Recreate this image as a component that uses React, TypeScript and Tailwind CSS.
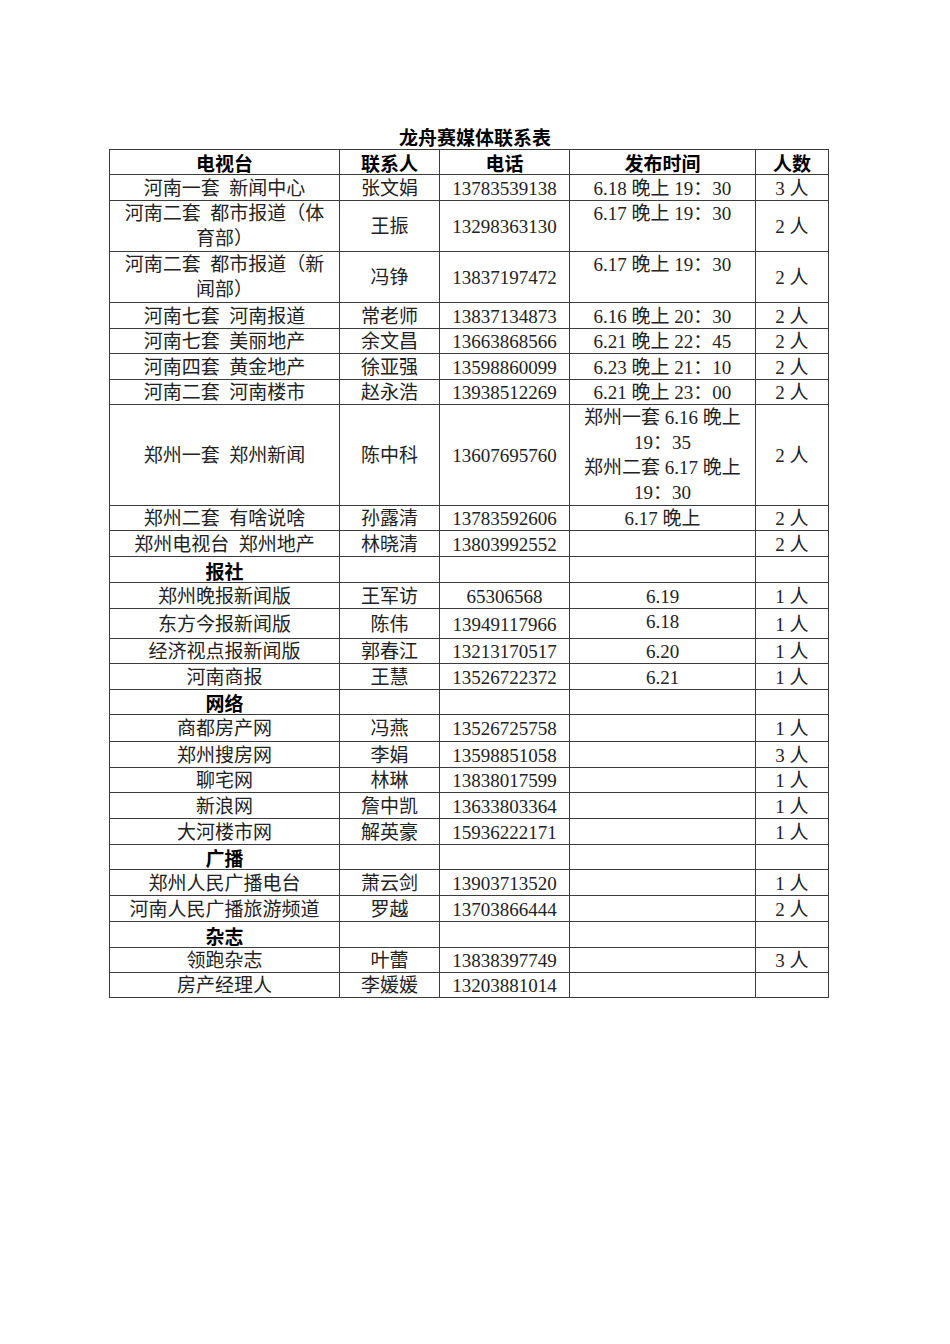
type Row = {
  cells: React.ReactNode[]
  h: string
  section?: boolean
  topTime?: boolean
}

const S = '\u2002'

const rows: Row[] = [
  { h: 'h-[26px]', cells: [`河南一套${S}新闻中心`, '张文娟', '13783539138', '6.18 晚上 19：30', '3 人'] },
  {
    h: 'h-[51px]',
    topTime: true,
    cells: [
      <>河南二套{S}都市报道（体<br />育部）</>,
      '王振',
      '13298363130',
      '6.17 晚上 19：30',
      '2 人',
    ],
  },
  {
    h: 'h-[51px]',
    topTime: true,
    cells: [
      <>河南二套{S}都市报道（新<br />闻部）</>,
      '冯铮',
      '13837197472',
      '6.17 晚上 19：30',
      '2 人',
    ],
  },
  { h: 'h-[26px]', cells: [`河南七套${S}河南报道`, '常老师', '13837134873', '6.16 晚上 20：30', '2 人'] },
  { h: 'h-[25px]', cells: [`河南七套${S}美丽地产`, '余文昌', '13663868566', '6.21 晚上 22：45', '2 人'] },
  { h: 'h-[26px]', cells: [`河南四套${S}黄金地产`, '徐亚强', '13598860099', '6.23 晚上 21：10', '2 人'] },
  { h: 'h-[25px]', cells: [`河南二套${S}河南楼市`, '赵永浩', '13938512269', '6.21 晚上 23：00', '2 人'] },
  {
    h: 'h-[101px]',
    cells: [
      `郑州一套${S}郑州新闻`,
      '陈中科',
      '13607695760',
      <>郑州一套 6.16 晚上<br />19：35<br />郑州二套 6.17 晚上<br />19：30</>,
      '2 人',
    ],
  },
  { h: 'h-[25px]', cells: [`郑州二套${S}有啥说啥`, '孙露清', '13783592606', '6.17 晚上', '2 人'] },
  { h: 'h-[26px]', cells: [`郑州电视台${S}郑州地产`, '林晓清', '13803992552', '', '2 人'] },
  { h: 'h-[26px]', section: true, cells: ['报社', '', '', '', ''] },
  { h: 'h-[26px]', cells: ['郑州晚报新闻版', '王军访', '65306568', '6.19', '1 人'] },
  { h: 'h-[30px]', topTime: true, cells: ['东方今报新闻版', '陈伟', '13949117966', '6.18', '1 人'] },
  { h: 'h-[25px]', cells: ['经济视点报新闻版', '郭春江', '13213170517', '6.20', '1 人'] },
  { h: 'h-[26px]', cells: ['河南商报', '王慧', '13526722372', '6.21', '1 人'] },
  { h: 'h-[25px]', section: true, cells: ['网络', '', '', '', ''] },
  { h: 'h-[27px]', cells: ['商都房产网', '冯燕', '13526725758', '', '1 人'] },
  { h: 'h-[26px]', cells: ['郑州搜房网', '李娟', '13598851058', '', '3 人'] },
  { h: 'h-[25px]', cells: ['聊宅网', '林琳', '13838017599', '', '1 人'] },
  { h: 'h-[26px]', cells: ['新浪网', '詹中凯', '13633803364', '', '1 人'] },
  { h: 'h-[26px]', cells: ['大河楼市网', '解英豪', '15936222171', '', '1 人'] },
  { h: 'h-[25px]', section: true, cells: ['广播', '', '', '', ''] },
  { h: 'h-[26px]', cells: ['郑州人民广播电台', '萧云剑', '13903713520', '', '1 人'] },
  { h: 'h-[26px]', cells: ['河南人民广播旅游频道', '罗越', '13703866444', '', '2 人'] },
  { h: 'h-[26px]', section: true, cells: ['杂志', '', '', '', ''] },
  { h: 'h-[25px]', cells: ['领跑杂志', '叶蕾', '13838397749', '', '3 人'] },
  { h: 'h-[25px]', cells: ['房产经理人', '李媛媛', '13203881014', '', ''] },
]

const headers = ['电视台', '联系人', '电话', '发布时间', '人数']

const serif = "font-['Liberation_Serif','Noto_Sans_CJK_SC',serif]"
const sans = "font-['Noto_Sans_CJK_SC',sans-serif]"

export default function App() {
  return (
    <div className="w-[950px] min-h-[1344px] bg-white pt-[125px] text-black">
      <h1 className={`${sans} text-center text-[19px] font-bold leading-[24px]`}>龙舟赛媒体联系表</h1>
      <div className="pl-[109px]">
        <table className="w-[719px] table-fixed border-collapse text-[19px]">
          <colgroup>
            <col className="w-[230px]" />
            <col className="w-[100px]" />
            <col className="w-[130px]" />
            <col className="w-[186px]" />
            <col className="w-[73px]" />
          </colgroup>
          <thead>
            <tr className="h-[25px]">
              {headers.map((t) => (
                <th
                  key={t}
                  className={`${sans} border border-[#3c3c3c] p-0 pt-[2px] text-center align-middle font-bold leading-[22px]`}
                >
                  {t}
                </th>
              ))}
            </tr>
          </thead>
          <tbody>
            {rows.map((r, i) => (
              <tr key={i} className={r.h}>
                {r.cells.map((c, j) => (
                  <td
                    key={j}
                    className={`border border-[#3c3c3c] p-0 text-center whitespace-nowrap ${
                      typeof c === 'string' ? 'leading-[22px] pt-[2px]' : 'leading-[25px]'
                    } ${r.section && j === 0 ? `${sans} font-bold` : `${serif} text-[#222]`} ${
                      r.topTime && j === 3 ? 'align-top' : 'align-middle'
                    }`}
                  >
                    {c}
                  </td>
                ))}
              </tr>
            ))}
          </tbody>
        </table>
      </div>
    </div>
  )
}
